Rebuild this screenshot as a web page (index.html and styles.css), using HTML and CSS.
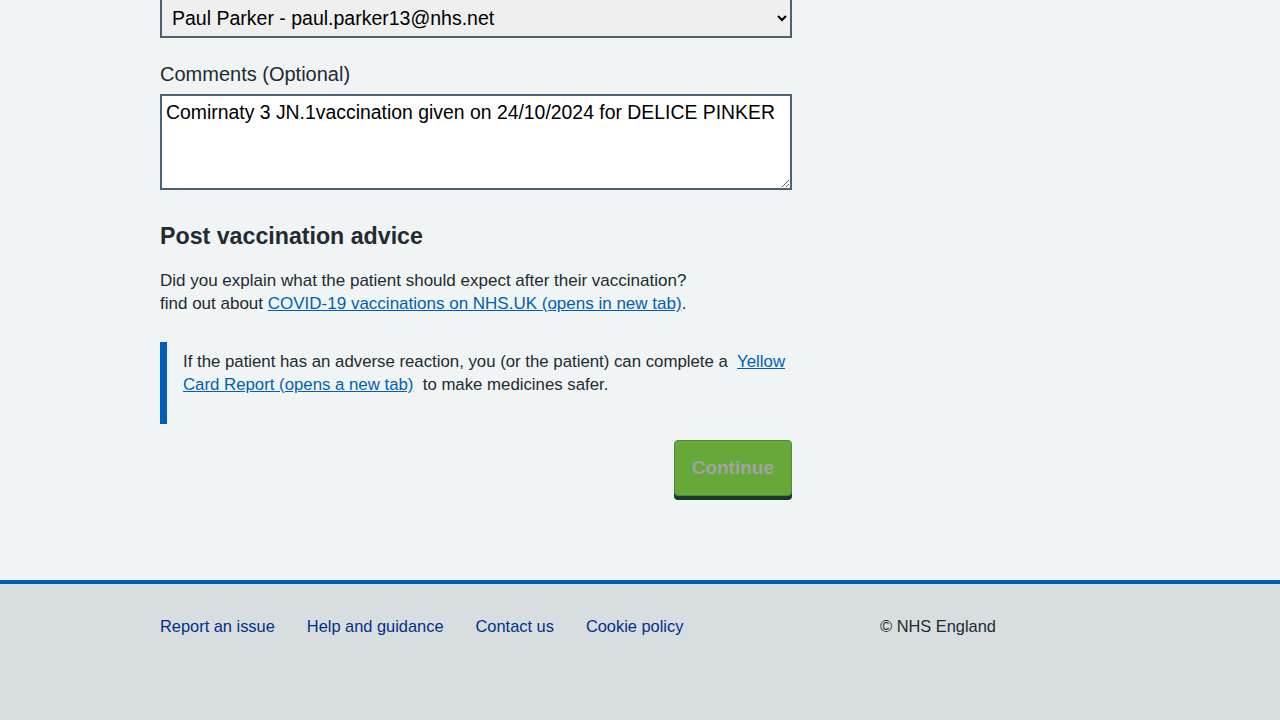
FILE: index.html
```html
<!DOCTYPE html>
<html lang="en">
<head>
<meta charset="utf-8">
<title>Post vaccination advice</title>
<link rel="stylesheet" href="styles.css">
</head>
<body>
<main class="main">
  <div class="container">
    <div class="form-group first">
      <select class="select" aria-label="Vaccinator">
        <option>Paul Parker - paul.parker13@nhs.net</option>
      </select>
    </div>
    <div class="form-group">
      <label class="label" for="comments">Comments (Optional)</label>
      <textarea class="textarea" id="comments" rows="3">Comirnaty 3 JN.1vaccination given on 24/10/2024 for DELICE PINKER</textarea>
    </div>
    <h2 class="heading">Post vaccination advice</h2>
    <p class="body">Did you explain what the patient should expect after their vaccination?<br>find out about <a class="link" href="#">COVID-19 vaccinations on NHS.UK (opens in new tab)</a>.</p>
    <div class="inset">
      <p>If the patient has an adverse reaction, you (or the patient) can complete a &nbsp;<a class="link" href="#">Yellow Card Report (opens a new tab)</a> &nbsp;to make medicines safer.</p>
    </div>
    <div class="actions">
      <button class="button" type="button">Continue</button>
    </div>
  </div>
</main>
<footer class="footer">
  <div class="footer-inner">
    <ul class="footer-list">
      <li><a href="#">Report an issue</a></li>
      <li><a href="#">Help and guidance</a></li>
      <li><a href="#">Contact us</a></li>
      <li><a href="#">Cookie policy</a></li>
    </ul>
    <p class="copyright">© NHS England</p>
  </div>
</footer>
</body>
</html>
```

FILE: styles.css
```css
* { box-sizing: border-box; }
html, body {
  margin: 0;
  padding: 0;
  height: 100%;
}
body {
  background: #f0f4f5;
  color: #212b32;
  font-family: "Liberation Sans", Arial, sans-serif;
  font-size: 16px;
  line-height: 23px;
  display: flex;
  flex-direction: column;
}
.main {
  flex: 0 0 auto;
  height: 580px;
}
.container {
  width: 632px;
  margin-left: 160px;
}
.form-group { margin-bottom: 24px; }
.form-group.first { margin-top: -2px; }
.select {
  display: block;
  width: 100%;
  height: 40px;
  border: 2px solid #4c6272;
  background: #efefef;
  color: #000;
  font-family: inherit;
  font-size: 19.5px;
  padding: 0 4px 0 6px;
  border-radius: 0;
}
.label {
  display: block;
  font-size: 20px;
  line-height: 24px;
  margin-bottom: 8px;
}
.textarea {
  display: block;
  width: 100%;
  height: 96px;
  border: 2px solid #4c6272;
  background: #fff;
  color: #000;
  font-family: inherit;
  font-size: 19.4px;
  line-height: 24px;
  padding: 4px 4px;
  resize: vertical;
  border-radius: 0;
}
.heading {
  font-size: 23.2px;
  line-height: 32px;
  font-weight: 700;
  margin: 30px 0 17px;
}
.body {
  margin: 0 0 27px;
  font-size: 17px;
}
.link { color: #005eb8; text-decoration: underline; }
.inset {
  border-left: 7px solid #005eb8;
  padding: 8px 0 28px 16px;
  margin-bottom: 16px;
  font-size: 16.8px;
}
.inset p { margin: 0; }
.actions {
  display: flex;
  justify-content: flex-end;
}
.button {
  font-family: inherit;
  font-size: 19px;
  font-weight: 700;
  color: #a2a2a2;
  background: #66a83a;
  border: 1px solid #4e8c31;
  border-radius: 4px;
  height: 56px;
  padding: 0 17px;
  box-shadow: 0 4px 0 #17392a;
  cursor: pointer;
}
.footer {
  flex: 1 0 auto;
  background: #d8dde0;
  border-top: 4px solid #005eb8;
}
.footer-inner {
  display: flex;
  align-items: flex-start;
  margin-left: 160px;
  padding-top: 31px;
  font-size: 16.4px;
}
.footer-list {
  list-style: none;
  margin: 0;
  padding: 0;
  display: flex;
  gap: 32px;
  width: 720px;
}
.footer-list a {
  color: #003087;
  text-decoration: none;
}
.copyright {
  margin: 0;
  color: #212b32;
}
```
